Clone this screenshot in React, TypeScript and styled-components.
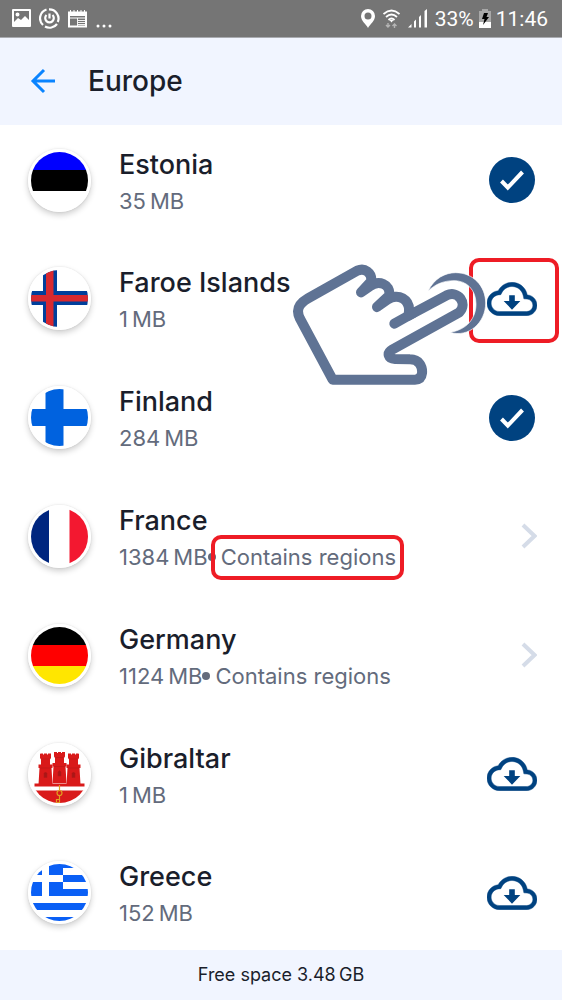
import React from 'react';
import styled, { createGlobalStyle } from 'styled-components';

const navy = '#004280';
const red = '#ee1c25';
const slate = '#5f7394';

const GlobalStyle = createGlobalStyle`
  *, *::before, *::after { box-sizing: border-box; }
  body {
    margin: 0;
    background: #fff;
    color: #1a1e2b;
    font-family: Inter, "Noto Sans", sans-serif;
  }
`;

const Screen = styled.div`
  display: flex;
  flex-direction: column;
  min-height: 100vh;
`;

const StatusBar = styled.div`
  display: flex;
  align-items: center;
  justify-content: space-between;
  height: 38px;
  padding: 0 14px 0 12px;
  background: #757575;
  border-bottom: 1px solid #a9abb0;
  color: #fff;
  font-family: Roboto, sans-serif;
  font-size: 21px;
  line-height: 24px;
`;

const StatusGroup = styled.div<{ $gap: number }>`
  display: flex;
  align-items: center;
  gap: ${(p) => p.$gap}px;
`;

const Icon = styled.svg`
  display: block;
  flex: none;
`;

const Header = styled.header`
  display: flex;
  align-items: center;
  gap: 32px;
  height: 87px;
  padding: 0 30px 2px;
  background: #f1f5ff;
`;

const IconButton = styled.button`
  display: flex;
  padding: 0;
  border: 0;
  background: none;
  cursor: pointer;
`;

const Title = styled.h1`
  margin: 0;
  font-size: 28px;
  font-weight: 500;
  line-height: 36px;
`;

const List = styled.ul`
  display: flex;
  flex: 1;
  flex-direction: column;
  justify-content: space-between;
  margin: 0;
  padding: 0 0 2px;
  list-style: none;
`;

const Row = styled.li`
  position: relative;
  display: flex;
  align-items: center;
  height: 110px;
  padding: 0 25px 0 28px;
`;

const FlagFrame = styled.div`
  flex: none;
  width: 63px;
  height: 63px;
  margin-right: 28px;
  border: 3px solid #fff;
  border-radius: 50%;
  box-shadow: 0 3px 6px rgba(0, 0, 0, 0.2), 0 0 2px rgba(0, 0, 0, 0.12);

  svg {
    display: block;
    border-radius: 50%;
  }
`;

const Info = styled.div`
  flex: 1;
  padding-top: 5px;
`;

const Name = styled.h2`
  margin: 0;
  font-size: 27px;
  font-weight: 500;
  line-height: 36px;
`;

const Size = styled.p`
  display: flex;
  align-items: center;
  margin: 0;
  color: #636b7c;
  font-size: 22px;
  line-height: 36px;
`;

const Dot = styled.span`
  width: 8px;
  height: 8px;
  margin-right: 5px;
  border-radius: 50%;
  background: currentColor;
`;

const Regions = styled.span<{ $marked?: boolean }>`
  position: relative;

  &::after {
    content: '';
    display: ${(p) => (p.$marked ? 'block' : 'none')};
    position: absolute;
    inset: -4px -8px -5px -10px;
    border: 4px solid ${red};
    border-radius: 10px;
  }
`;

const Action = styled.div`
  position: relative;
  display: flex;
  justify-content: center;
  width: 50px;
`;

const ChevronButton = styled(IconButton)`
  margin-left: 34px;
`;

const Callout = styled.span`
  position: absolute;
  inset: -24px -22px -27px -18px;
  border: 4px solid ${red};
  border-radius: 10px;
  pointer-events: none;
`;

const Pointer = styled.svg`
  position: absolute;
  right: 50px;
  top: -18px;
  pointer-events: none;
`;

const Footer = styled.footer`
  height: 50px;
  background: #f1f5ff;
  font-size: 18px;
  line-height: 50px;
  text-align: center;
`;

const FlagSvg = ({ name, children }: { name: string; children: React.ReactNode }) => (
  <svg width="57" height="57" viewBox="0 0 57 57" role="img" aria-label={`Flag of ${name}`}>
    <rect width="57" height="57" fill="#fff" />
    {children}
  </svg>
);

const Tower = ({ x, y }: { x: number; y: number }) => (
  <g transform={`translate(${x} ${y})`}>
    <path
      d="M1.500 0h3v1h1V0h3v1h1V0h3v4.500L11.500 6v5H14v3.500h-1l1 16.500H0l1-16.500H0V11h2.500V6L1.500 4.500z"
      fill="#d91a1a"
    />
    <path d="M5.500 20q1.500-3 3 0v4h-3zM1.500 14.500h11M3 5.500h8" stroke="#b81818" strokeWidth=".6" fill="#a91717" />
  </g>
);

const flags: Record<string, React.ReactNode> = {
  Estonia: (
    <>
      <rect width="57" height="18" fill="#00f" />
      <rect y="18" width="57" height="21" />
    </>
  ),
  'Faroe Islands': (
    <>
      <path d="M12 0h14v21h31v14H26v22H12V35H0V21h12z" fill="#003f9b" />
      <path d="M15 0h7.500v25H57v6.500H22.500V57H15V31.500H0V25h15z" fill="#d8292f" />
    </>
  ),
  Finland: <path d="M14.500 0h18v20H57v17H32.500v20h-18V37H0V20h14.500z" fill="#0062df" />,
  France: (
    <>
      <rect width="18" height="57" fill="#00267f" />
      <rect x="38.500" width="19" height="57" fill="#f31830" />
    </>
  ),
  Germany: (
    <>
      <rect width="57" height="18" />
      <rect y="18" width="57" height="21" fill="#f00" />
      <rect y="39" width="57" height="18" fill="#ffe600" />
    </>
  ),
  Gibraltar: (
    <>
      <Tower x={7.5} y={7.5} />
      <Tower x={35.5} y={7.5} />
      <Tower x={21.5} y={6} />
      <path d="M3.500 37.500h50v3h-50zM0 44.500h57V57H0z" fill="#d91a1a" />
      <g fill="none" stroke="#e0a020" strokeWidth="1.200">
        <path d="M28.500 39v5M28.500 50v7M28.500 53.500h-3v3h3" />
        <circle cx="28.500" cy="47" r="2.500" />
      </g>
    </>
  ),
  Greece: (
    <path
      d="M0 0h11v11H0zM18 0h39v4H32v7H18zM0 18h11v14H0zM18 18h14v7h25v7H18zM32 11h25v7H32zM0 39h57v7H0zM0 53h57v4H0z"
      fill="#0a5ff5"
    />
  ),
};

const CheckIcon = () => (
  <Icon width="46" height="46" viewBox="0 0 46 46" role="img" aria-label="Downloaded">
    <circle cx="23" cy="23" r="23" fill={navy} />
    <path d="M12.500 24l6.300 6.500 14.700-15.500" fill="none" stroke="#fff" strokeWidth="4" />
  </Icon>
);

const CloudIcon = () => (
  <Icon width="50" height="34" viewBox="0 4 24 16" fill={navy} aria-hidden="true">
    <path
      d="M19.350 10.040C18.670 6.590 15.640 4 12 4 9.110 4 6.600 5.640 5.350 8.040 2.340 8.360 0 10.910 0 14c0 3.310 2.690 6 6 6h13c2.760 0 5-2.240 5-5 0-2.640-2.050-4.780-4.650-4.960zM19 18H6c-2.210 0-4-1.790-4-4 0-2.050 1.530-3.760 3.560-3.970l1.070-.110.500-.950C8.080 7.140 9.940 6 12 6c2.620 0 4.880 1.860 5.390 4.430l.300 1.500 1.530.110c1.560.100 2.780 1.410 2.780 2.960 0 1.650-1.350 3-3 3z"
      stroke={navy}
      strokeWidth=".2"
    />
    <path d="M10.650 10.200h2.700V13H16l-4 4.100L8 13h2.650z" />
  </Icon>
);

const ChevronIcon = () => (
  <Icon width="16" height="26" viewBox="0 0 16 26" aria-hidden="true">
    <path d="M2 2l11.500 11L2 24" fill="none" stroke="#d5dce8" strokeWidth="4" />
  </Icon>
);

const HandPointer = () => (
  <Pointer width="195" height="122" viewBox="36 58 585 366" aria-hidden="true">
    <g stroke={slate} strokeWidth="30" strokeLinecap="round" strokeLinejoin="round">
      <path
        d="M158 405L60 222C46 194 58 176 84 161L232 78C254 68 276 84 274 107C300 110 326 120 328 150C360 150 392 165 386 208L500 152C530 136 560 174 540 202L338 314C318 326 325 342 345 343L390 344C418 344 428 366 426 386Q424 405 405 405Z"
        fill="#fff"
        stroke="none"
      />
      <path
        d="M386 213L500 152C534 136 564 176 538 203L338 314C318 326 325 342 345 343L390 344C418 344 428 366 426 386Q424 405 405 405H158L60 222C46 194 58 176 84 161L232 78C254 68 276 84 274 109L243 143L268 126C296 104 332 118 328 152L291 187L322 165C352 144 394 162 386 208"
        fill="none"
      />
      <path d="M343 237L400 205" />
    </g>
    <path
      d="M444 140C462 100 497 84 527 84C580 84 617 125 617 175C617 235 565 280 510 263C560 255 588 222 588 178C588 135 560 108 522 108C492 108 465 118 444 140Z"
      fill={slate}
      stroke="#fff"
      strokeWidth="2"
    />
  </Pointer>
);

const NotificationIcons = () => (
  <>
    <Icon width="19" height="19" viewBox="0 0 19 19" aria-hidden="true">
      <path fill="#fff" fillRule="evenodd" d="M1 0h17q1 0 1 1v16q0 1-1 1H1q-1 0-1-1V1q0-1 1-1zm1 2v11l4-4 3 2 4-4 4 4V2zM5.500 3.500a2 2 0 1 1 0 4 2 2 0 0 1 0-4z" />
    </Icon>
    <Icon width="21" height="21" viewBox="0 0 21 21" fill="none" stroke="#fff" strokeWidth="2.200" aria-hidden="true">
      <path d="M7.500 1.500A9.200 9.200 0 0 0 4 17M6 18.500A9.200 9.200 0 0 0 18 16M18.800 14A9.200 9.200 0 0 0 10 1.300" />
      <path d="M7.500 7a4.300 4.300 0 1 0 6 0M10.500 5.500v5" />
    </Icon>
    <Icon width="19" height="18" viewBox="0 0 19 18" aria-hidden="true">
      <path d="M1 2.500h17v14H1z" fill="none" stroke="#fff" strokeWidth="2" />
      <path d="M1 2h17v4H1z" fill="#fff" />
      <path d="M2.500 0v2M6 0v2M9.500 0v2M13 0v2M16.500 0v2" stroke="#fff" />
      <path d="M2 8h15" stroke="#fff" />
      <path d="M9.500 8v8M10 10.500h7M10 12.500h7M10 14.500h7" stroke="#fff" strokeWidth=".9" />
    </Icon>
    <Icon width="18" height="18" viewBox="0 0 18 18" fill="#fff" aria-hidden="true">
      <circle cx="3" cy="16" r="1.500" />
      <circle cx="9" cy="16" r="1.500" />
      <circle cx="15" cy="16" r="1.500" />
    </Icon>
  </>
);

const SystemIcons = () => (
  <>
    <Icon width="14" height="19" viewBox="0 0 14 19" aria-hidden="true">
      <path fill="#fff" fillRule="evenodd" d="M7 0a7 7 0 0 1 7 7c0 5-5 8-7 12C5 15 0 12 0 7a7 7 0 0 1 7-7zm0 3.500a3.500 3.500 0 1 0 0 7 3.500 3.500 0 0 0 0-7z" />
    </Icon>
    <Icon width="17" height="20" viewBox="0 0 17 20" fill="none" stroke="#fff" strokeWidth="1.800" aria-hidden="true">
      <path d="M.500 5q8-7 16 0M3 8q5.500-5 11 0M5.500 11q3-3 6 0" />
      <path d="M6.500 11h4l-2 2.500z" fill="#fff" stroke="none" />
      <path d="M5 14v4M3 16l2 2 2-2M11.500 19v-4M9.500 17l2-2 2 2" stroke="#b5b5b5" strokeWidth="1.400" />
    </Icon>
    <Icon width="19" height="19" viewBox="0 0 19 19" fill="#fff" aria-hidden="true">
      <path d="M0 18.500L3.500 15v3.500zM6 12.500l2-2v8H6zM11 8l2-2v12.500h-2zM16.500 2L19 0v18.500h-2.500z" />
    </Icon>
  </>
);

const BatteryIcon = () => (
  <Icon width="12" height="19" viewBox="0 0 12 19" aria-hidden="true">
    <path d="M3 0h6v2h3v17H0V2h3z" fill="#a8a8a8" />
    <path d="M0 13h12v6H0z" fill="#fff" />
    <path d="M5 4h4L7.500 8H10l-6 8 1.500-6H3z" fill="#000" />
  </Icon>
);

type Status = 'done' | 'download' | 'open';

interface Country {
  name: string;
  size: string;
  status: Status;
  regions?: boolean;
  marked?: boolean;
}

const countries: Country[] = [
  { name: 'Estonia', size: '35', status: 'done' },
  { name: 'Faroe Islands', size: '1', status: 'download', marked: true },
  { name: 'Finland', size: '284', status: 'done' },
  { name: 'France', size: '1384', status: 'open', regions: true, marked: true },
  { name: 'Germany', size: '1124', status: 'open', regions: true },
  { name: 'Gibraltar', size: '1', status: 'download' },
  { name: 'Greece', size: '152', status: 'download' },
];

const CountryRow = ({ name, size, status, regions, marked }: Country) => (
  <Row>
    <FlagFrame>
      <FlagSvg name={name}>{flags[name]}</FlagSvg>
    </FlagFrame>
    <Info>
      <Name>{name}</Name>
      <Size>
        {size}&#8201;MB
        {regions && (
          <>
            <Dot />
            <Regions $marked={marked}>Contains regions</Regions>
          </>
        )}
      </Size>
    </Info>
    <Action>
      {status === 'done' && <CheckIcon />}
      {status === 'download' && (
        <IconButton type="button" aria-label={`Download ${name}`}>
          <CloudIcon />
        </IconButton>
      )}
      {status === 'open' && (
        <ChevronButton type="button" aria-label={`Open ${name}`}>
          <ChevronIcon />
        </ChevronButton>
      )}
      {status === 'download' && marked && (
        <>
          <Callout />
          <HandPointer />
        </>
      )}
    </Action>
  </Row>
);

export default function App() {
  return (
    <Screen>
      <GlobalStyle />
      <StatusBar>
        <StatusGroup $gap={8}>
          <NotificationIcons />
        </StatusGroup>
        <StatusGroup $gap={5}>
          <StatusGroup $gap={8}>
            <SystemIcons />
            <span>33%</span>
          </StatusGroup>
          <BatteryIcon />
          <span>11:46</span>
        </StatusGroup>
      </StatusBar>
      <Header>
        <IconButton type="button" aria-label="Back">
          <Icon width="26" height="26" viewBox="0 0 26 26" fill="none" stroke="#0a84ff" strokeWidth="3" aria-hidden="true">
            <path d="M25 13H3M14 2L3 13l11 11" />
          </Icon>
        </IconButton>
        <Title>Europe</Title>
      </Header>
      <List>
        {countries.map((country) => (
          <CountryRow key={country.name} {...country} />
        ))}
      </List>
      <Footer>Free space 3.48&#8201;GB</Footer>
    </Screen>
  );
}
